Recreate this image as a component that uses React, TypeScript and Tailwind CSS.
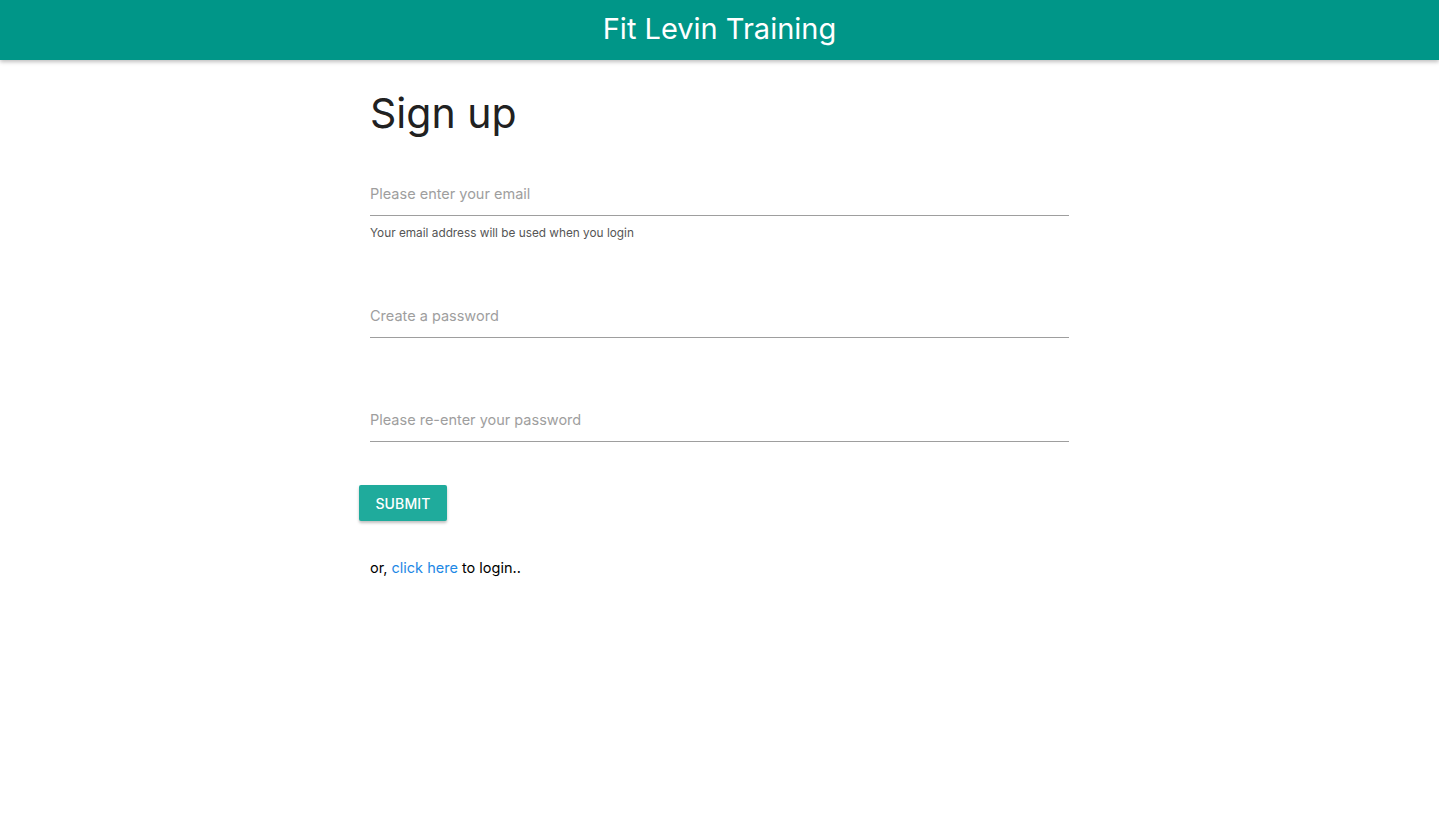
const font = { fontFamily: "Inter, 'Noto Sans', sans-serif" };

const fieldClass =
  "block h-[45px] w-full border-0 border-b border-[#9e9e9e] bg-transparent text-[14.5px] text-[#212121] outline-none placeholder:text-[#9e9e9e]";

const App = () => {
  return (
    <div className="min-h-screen bg-white" style={font}>
      <header className="flex h-[60px] items-center justify-center bg-[#009688] pb-[4px] shadow-[0_2px_4px_rgba(0,0,0,0.25)]">
        <h1 className="text-[29px] leading-none text-white">Fit Levin Training</h1>
      </header>
      <main className="mx-auto w-[699px]">
        <h2 className="mt-[31px] text-[41px] leading-[1.1] text-[#212121]">Sign up</h2>

        <form onSubmit={(e) => e.preventDefault()}>
          <div className="mt-[35px]">
            <input type="email" placeholder="Please enter your email" className={fieldClass} />
            <p className="mt-[8px] text-[11.8px] leading-[18px] text-[#555]">Your email address will be used when you login</p>
          </div>

          <div className="mt-[51px]">
            <input type="password" placeholder="Create a password" className={fieldClass} />
          </div>

          <div className="mt-[59px]">
            <input type="password" placeholder="Please re-enter your password" className={fieldClass} />
          </div>

          <button
            type="submit"
            className="-ml-[11px] mt-[43px] h-[36px] w-[88px] rounded-[2px] bg-[#1fab9c] text-[14px] font-medium tracking-[0.01em] text-white uppercase shadow-[0_2px_3px_rgba(0,0,0,0.25)]"
          >
            Submit
          </button>
        </form>

        <p className="mt-[35px] text-[14.5px] leading-[24px] text-black">
          or, <a href="#" className="text-[#1e88e5]">click here</a> to login..
        </p>
      </main>
    </div>
  );
};

export default App;
